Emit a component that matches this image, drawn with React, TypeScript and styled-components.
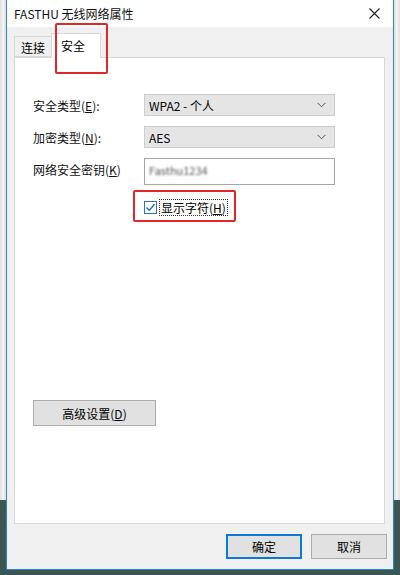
import React from "react";
import styled, { createGlobalStyle } from "styled-components";

const GlobalStyle = createGlobalStyle`
  html, body {
    margin: 0;
    padding: 0;
    background: #3c5654;
  }
  body {
    font-family: "Microsoft YaHei", "Noto Sans CJK SC", sans-serif;
    font-size: 12px;
    color: #000;
  }
`;

const Chevron = () => (
  <svg width="9" height="6" viewBox="0 0 9 6">
    <path d="M0.5 0.8 L4.5 4.8 L8.5 0.8" fill="none" stroke="#555" strokeWidth="1" />
  </svg>
);

const CheckMark = () => (
  <svg width="11" height="11" viewBox="0 0 11 11">
    <path d="M1.5 5.5 L4.3 8.3 L9.6 2.2" fill="none" stroke="#1e6fc5" strokeWidth="1.4" />
  </svg>
);

const Key = ({ k }: { k: string }) => <U>{k}</U>;

const App = () => {
  return (
    <>
      <GlobalStyle />
      <Desktop>
        <LeftStrip>
          <StripTop />
        </LeftStrip>
        <Dialog>
          <TitleBar>
            <Title>FASTHU 无线网络属性</Title>
            <CloseBtn>
              <svg width="11" height="11" viewBox="0 0 11 11">
                <path d="M0.5 0.5 L10.5 10.5 M10.5 0.5 L0.5 10.5" stroke="#222" strokeWidth="1.1" />
              </svg>
            </CloseBtn>
          </TitleBar>
          <Body>
            <Tabs>
              <Tab>连接</Tab>
              <Tab $active>安全</Tab>
            </Tabs>
            <Panel>
              <Form>
                <Label>
                  安全类型(<Key k="E" />):
                </Label>
                <Select>
                  <span>WPA2 - 个人</span>
                  <Chevron />
                </Select>
                <Label>
                  加密类型(<Key k="N" />):
                </Label>
                <Select>
                  <span>AES</span>
                  <Chevron />
                </Select>
                <Label $top>
                  网络安全密钥(<Key k="K" />)
                </Label>
                <TextBox>
                  <Blurred>Fasthu1234</Blurred>
                </TextBox>
                <span />
                <CheckRow>
                  <CheckBox>
                    <CheckMark />
                  </CheckBox>
                  <FocusLabel>
                    显示字符(<Key k="H" />)
                  </FocusLabel>
                </CheckRow>
              </Form>
              <AdvancedButton>
                高级设置(<Key k="D" />)
              </AdvancedButton>
            </Panel>
            <Footer>
              <Button $primary>确定</Button>
              <Button>取消</Button>
            </Footer>
          </Body>
          <Mark style={{ left: 48, top: 23, width: 49, height: 47 }} />
          <Mark style={{ left: 126, top: 190, width: 99, height: 28 }} />
        </Dialog>
        <RightStrip>
          <StripTop />
        </RightStrip>
      </Desktop>
    </>
  );
};

export default App;

const Desktop = styled.div`
  display: flex;
  width: 400px;
  height: 575px;
  background: #3c5654;
  overflow: hidden;
`;

const LeftStrip = styled.div`
  width: 6px;
  flex-shrink: 0;
  display: flex;
  flex-direction: column;
`;

const RightStrip = styled(LeftStrip)``;

const StripTop = styled.div`
  height: 500px;
  background: repeating-linear-gradient(
    90deg,
    #e4e4e4 0px,
    #e4e4e4 2px,
    #f2f2f2 2px,
    #f2f2f2 4px
  );
`;

const Dialog = styled.div`
  position: relative;
  width: 386px;
  height: 569px;
  flex-shrink: 0;
  border: 1px solid #2b86d5;
  border-top: none;
  display: flex;
  flex-direction: column;
  background: #f0f0f0;
`;

const TitleBar = styled.div`
  height: 27px;
  background: #fff;
  display: flex;
  align-items: center;
  justify-content: space-between;
  padding: 0 13px 0 7px;
`;

const Title = styled.div`
  font-size: 12px;
  color: #111;
`;

const CloseBtn = styled.div`
  display: flex;
  align-items: center;
`;

const Body = styled.div`
  flex: 1;
  display: flex;
  flex-direction: column;
  padding: 6px 6px 0 7px;
`;

const Tabs = styled.div`
  display: flex;
  align-items: flex-end;
  height: 24px;
  position: relative;
  z-index: 1;
`;

const Tab = styled.div<{ $active?: boolean }>`
  box-sizing: border-box;
  height: ${(p) => (p.$active ? "25px" : "21px")};
  margin-bottom: ${(p) => (p.$active ? "-1px" : "0")};
  padding: ${(p) => (p.$active ? "5px 0 0 9px" : "4px 0 0 6px")};
  width: ${(p) => (p.$active ? "50px" : "38px")};
  margin-left: ${(p) => (p.$active ? "-1px" : "0")};
  background: ${(p) => (p.$active ? "#fff" : "#f0f0f0")};
  border: 1px solid #d9d9d9;
  border-bottom: ${(p) => (p.$active ? "none" : "1px solid #d9d9d9")};
  font-size: 12px;
  line-height: 14px;
`;

const Panel = styled.div`
  box-sizing: border-box;
  width: 371px;
  height: 467px;
  background: #fff;
  border: 1px solid #d9d9d9;
  display: flex;
  flex-direction: column;
  padding: 36px 0 0 18px;
`;

const Form = styled.div`
  display: grid;
  grid-template-columns: 111px 191px;
  grid-template-rows: 22px 22px 27px 22px;
  row-gap: 10px;
`;

const Label = styled.div<{ $top?: boolean }>`
  display: flex;
  align-items: ${(p) => (p.$top ? "flex-start" : "center")};
  padding-top: ${(p) => (p.$top ? "3px" : "0")};
  font-size: 12px;
  color: #111;
`;

const U = styled.span`
  text-decoration: underline;
`;

const Select = styled.div`
  box-sizing: border-box;
  display: flex;
  align-items: center;
  justify-content: space-between;
  padding: 0 8px 0 4px;
  background: #e5e5e5;
  border: 1px solid #cdcdcd;
  font-size: 12px;
`;

const TextBox = styled.div`
  box-sizing: border-box;
  border: 1px solid #a5a5a5;
  background: #fff;
  padding: 2px 0 0 4px;
`;

const Blurred = styled.span`
  color: #555;
  filter: blur(1.3px);
  font-size: 11px;
`;

const CheckRow = styled.div`
  display: flex;
  align-items: center;
  gap: 2px;
  margin-top: 2px;
`;

const CheckBox = styled.div`
  box-sizing: border-box;
  width: 13px;
  height: 13px;
  border: 1px solid #2a74c7;
  background: #fff;
  display: flex;
  align-items: center;
  justify-content: center;
`;

const FocusLabel = styled.div`
  border: 1px dotted #333;
  padding: 0 1px;
  line-height: 15px;
  font-size: 12px;
`;

const AdvancedButton = styled.div`
  box-sizing: border-box;
  width: 123px;
  height: 26px;
  margin-top: 183px;
  background: #e1e1e1;
  border: 1px solid #adadad;
  display: flex;
  align-items: center;
  justify-content: center;
  font-size: 12px;
`;

const Footer = styled.div`
  display: flex;
  justify-content: flex-end;
  gap: 9px;
  padding: 10px 0 0 0;
`;

const Button = styled.div<{ $primary?: boolean }>`
  box-sizing: border-box;
  width: 76px;
  height: 25px;
  background: #e1e1e1;
  border: ${(p) => (p.$primary ? "2px solid #0a78d4" : "1px solid #adadad")};
  display: flex;
  align-items: center;
  justify-content: center;
  font-size: 12px;
`;

const Mark = styled.div`
  position: absolute;
  border: 2px solid #e4262b;
  border-radius: 2px;
  z-index: 5;
  pointer-events: none;
`;
